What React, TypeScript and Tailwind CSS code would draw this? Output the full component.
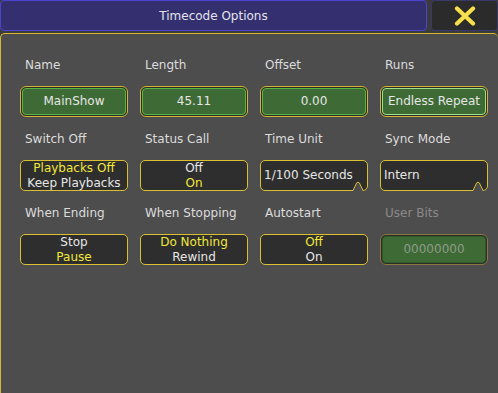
import React from 'react';

type Cell = {
  label: string;
  kind: 'green' | 'dark' | 'select' | 'disabled';
  lines: { text: string; yellow?: boolean }[];
  selected?: boolean;
  align?: 'left' | 'center';
};

const cells: Cell[] = [
  { label: 'Name', kind: 'green', lines: [{ text: 'MainShow' }] },
  { label: 'Length', kind: 'green', lines: [{ text: '45.11' }] },
  { label: 'Offset', kind: 'green', lines: [{ text: '0.00' }] },
  { label: 'Runs', kind: 'green', selected: true, lines: [{ text: 'Endless Repeat' }] },
  { label: 'Switch Off', kind: 'dark', lines: [{ text: 'Playbacks Off', yellow: true }, { text: 'Keep Playbacks' }] },
  { label: 'Status Call', kind: 'dark', lines: [{ text: 'Off' }, { text: 'On', yellow: true }] },
  { label: 'Time Unit', kind: 'select', align: 'left', lines: [{ text: '1/100 Seconds' }] },
  { label: 'Sync Mode', kind: 'select', align: 'left', lines: [{ text: 'Intern' }] },
  { label: 'When Ending', kind: 'dark', lines: [{ text: 'Stop' }, { text: 'Pause', yellow: true }] },
  { label: 'When Stopping', kind: 'dark', lines: [{ text: 'Do Nothing', yellow: true }, { text: 'Rewind' }] },
  { label: 'Autostart', kind: 'dark', lines: [{ text: 'Off', yellow: true }, { text: 'On' }] },
  { label: 'User Bits', kind: 'disabled', lines: [{ text: '00000000' }] },
];

function Lines({ cell }: { cell: Cell }) {
  return (
    <div
      className={`flex flex-col justify-center h-full leading-[15px] ${
        cell.align === 'left' ? 'items-start pl-[3px]' : 'items-center'
      }`}
    >
      {cell.lines.map((l) => (
        <span
          key={l.text}
          className={
            cell.kind === 'disabled'
              ? 'text-[#8e9a8a]'
              : l.yellow
              ? 'text-[#f2e83a]'
              : 'text-[#e6e6e6]'
          }
        >
          {l.text}
        </span>
      ))}
    </div>
  );
}

function Notch() {
  return (
    <svg className="absolute right-[4px] bottom-[-1px]" width="10" height="10" viewBox="0 0 10 10">
      <path d="M0 10 L0 9.5 L3.6 2 Q5 0.2 6.4 2 L10 9.5 L10 10 Z" fill="#4d4d4d" />
      <path d="M0 9.5 L3.6 2 Q5 0.2 6.4 2 L10 9.5" fill="none" stroke="#d9bf32" strokeWidth="1" />
    </svg>
  );
}

function Field({ cell }: { cell: Cell }) {
  if (cell.kind === 'green' || cell.kind === 'disabled') {
    const outer = cell.kind === 'disabled' ? 'border-[#8c7740]' : 'border-[#d2b630]';
    const inner = cell.kind === 'disabled'
      ? 'border-[#2f5a2a]'
      : cell.selected
      ? 'border-[#9ee08c]'
      : 'border-[#56b443]';
    return (
      <div className={`h-[31px] rounded-[6px] border ${outer} bg-[#2c2c2c] p-px`}>
        <div className={`h-full rounded-[4px] border ${inner} bg-[#3e6b35]`}>
          <Lines cell={cell} />
        </div>
      </div>
    );
  }
  return (
    <div className="relative h-[31px] rounded-[5px] border border-[#d9bf32] bg-[#2e2e2e]">
      <Lines cell={cell} />
      {cell.kind === 'select' && <Notch />}
    </div>
  );
}

export default function App() {
  return (
    <div
      className="w-[498px] h-[393px] overflow-hidden bg-[#3b3b3b] flex flex-col text-[12px]"
      style={{ fontFamily: '"DejaVu Sans", "Liberation Sans", sans-serif' }}
    >
      {/* header */}
      <div className="flex h-[31px] gap-[4px] shrink-0">
        <div className="flex-1 flex items-center justify-center rounded-[4px] border border-[#4a44d0] bg-[#34306f] text-[12px] text-[#e4e4ee]">
          Timecode Options
        </div>
        <div className="w-[67px] flex items-center justify-center rounded-[4px] border border-[#3a3868] bg-[#2b2b2b]">
          <svg width="22" height="20" viewBox="0 0 22 20">
            <path d="M3 2.5 L19 17.5 M19 2.5 L3 17.5" stroke="#f6df4a" strokeWidth="4.2" strokeLinecap="round" />
          </svg>
        </div>
      </div>

      {/* panel */}
      <div className="mt-[2px] flex-1 rounded-tl-[5px] rounded-tr-[5px] border-t border-l border-[#d8b830] bg-[#4d4d4d] pl-[19px] pt-[23px]">
        <div className="grid grid-cols-[108px_108px_108px_108px] gap-x-[12px] gap-y-[14px]">
          {cells.map((c) => (
            <div key={c.label} className="flex flex-col">
              <div
                className={`h-[16px] leading-[16px] pl-[5px] mb-[13px] ${
                  c.kind === 'disabled' ? 'text-[#8a8a8a]' : 'text-[#dcdcdc]'
                }`}
              >
                {c.label}
              </div>
              <Field cell={c} />
            </div>
          ))}
        </div>
      </div>
    </div>
  );
}
